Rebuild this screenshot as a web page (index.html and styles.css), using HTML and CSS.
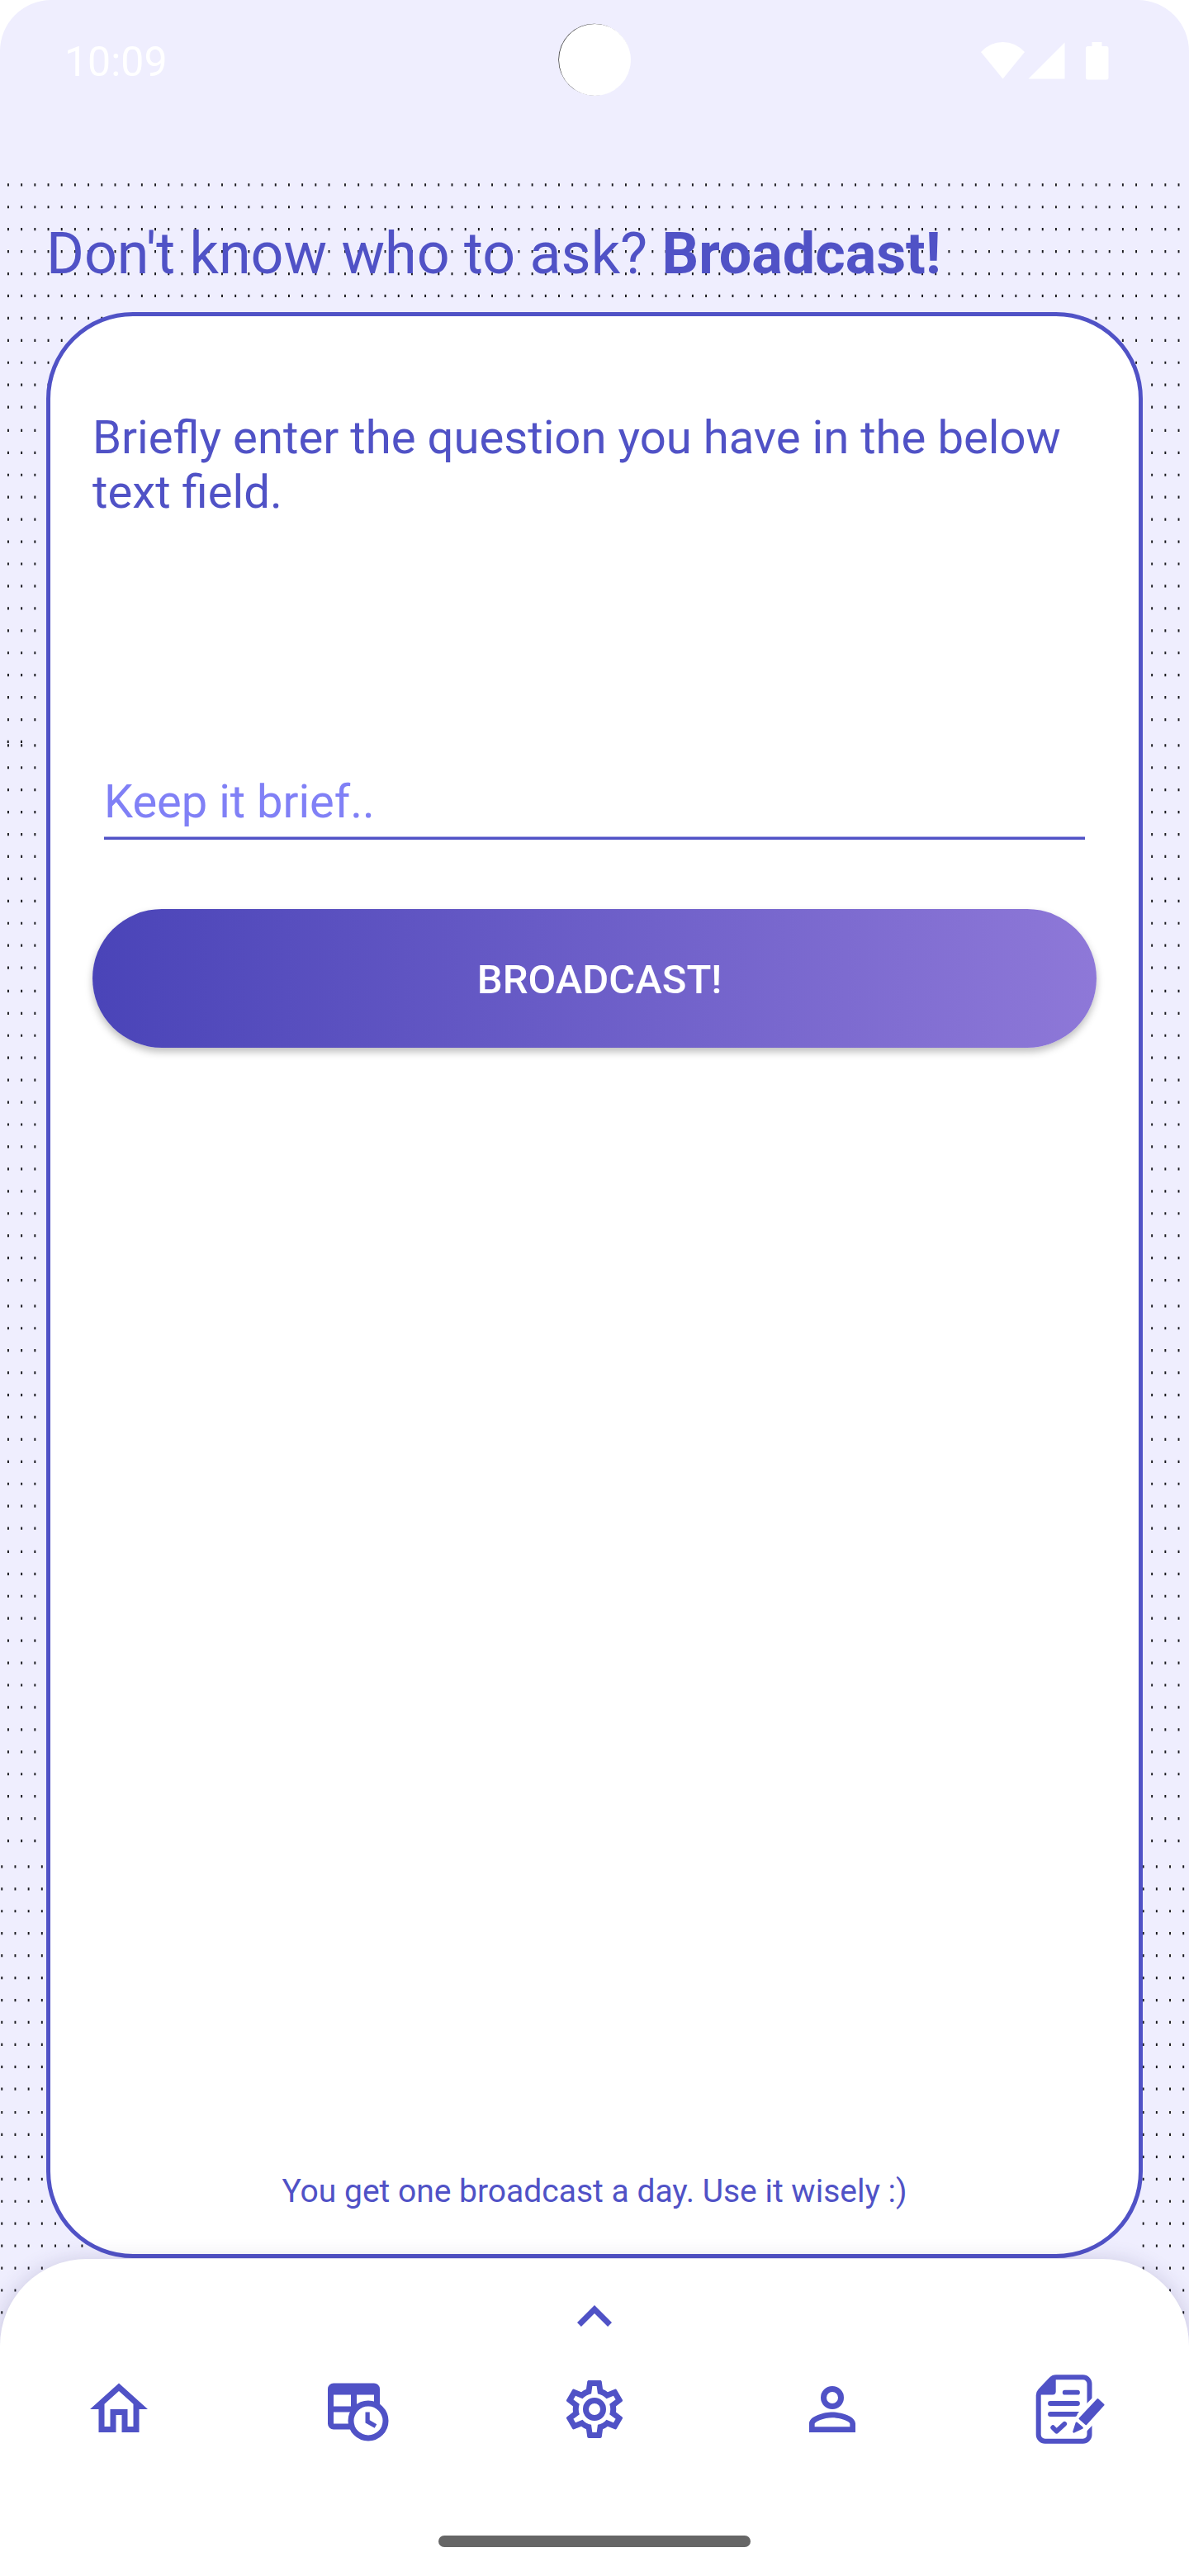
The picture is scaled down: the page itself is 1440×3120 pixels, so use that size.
FILE: index.html
```html
<!DOCTYPE html>
<html lang="en">
<head>
<meta charset="utf-8">
<title>Broadcast</title>
<link rel="stylesheet" href="styles.css">
</head>
<body>
<div class="screen">
  <svg class="dots" viewBox="0 0 1440 3120" aria-hidden="true">
    <defs>
      <path id="row" d="M9 0H401M417 0H889.5M905.6 0H1378M1394.2 0H1440"/>
      <path id="row-low" d="M1.3 0H120M1383.7 0H1440"/>
      <g id="five"><use href="#row"/><use href="#row" y="26.93"/><use href="#row" y="53.87"/><use href="#row" y="80.8"/><use href="#row" y="107.73"/></g>
      <g id="block">
        <use href="#five"/><use href="#five" y="134.67"/><use href="#row" y="269.33"/>
        <use href="#five" y="297.6"/><use href="#five" y="432.27"/>
        <use href="#row" y="566.93"/><use href="#row" y="593.87"/><use href="#row" y="620.8"/><use href="#row" y="647.73"/>
      </g>
      <g id="five-low"><use href="#row-low"/><use href="#row-low" y="26.93"/><use href="#row-low" y="53.87"/><use href="#row-low" y="80.8"/><use href="#row-low" y="107.73"/></g>
    </defs>
    <g class="dot-rows">
      <use href="#block" y="223.8"/>
      <path d="M8.8 898.3H30"/>
      <use href="#block" y="902.8"/>
      <use href="#block" y="1581.8"/>
      <use href="#five-low" y="2260.9"/><use href="#five-low" y="2395.6"/><use href="#row-low" y="2530.2"/>
      <use href="#five-low" y="2558.5"/><use href="#five-low" y="2693.2"/>
    </g>
  </svg>

  <header class="status">
    <span class="time">10:09</span>
    <span class="camera"></span>
    <svg class="status-icons" viewBox="0 0 156 48" aria-hidden="true">
      <path d="M0 13Q11 1 26.500 1T53 13L26.500 45.500Z"/>
      <path d="M57.500 45.500L101.500 1.500V45.500Z"/>
      <path d="M134.500 1h12v5h5.500a2.500 2.500 0 0 1 2.500 2.500v35.500a2.500 2.500 0 0 1-2.500 2.500h-22.500a2.500 2.500 0 0 1-2.500-2.500V8.500a2.500 2.500 0 0 1 2.500-2.500h5z"/>
    </svg>
  </header>

  <main class="main">
    <h1 class="title">Don't know who to ask? <b>Broadcast!</b></h1>
    <section class="card">
      <p class="lead">Briefly enter the question you have in the below text field.</p>
      <div class="field">Keep it brief..</div>
      <button class="send" type="button">BROADCAST!</button>
      <p class="note">You get one broadcast a day. Use it wisely :)</p>
    </section>
  </main>

  <nav class="nav">
    <svg class="icon" viewBox="0 0 24 24"><path d="M7.410 15.410L12 10.830l4.590 4.580L18 14l-6-6-6 6z"/></svg>
    <div class="tabs">
      <svg class="icon" viewBox="0 0 24 24"><path d="M12 5.690l5 4.500V18h-2v-6H9v6H7v-7.810l5-4.500M12 3L2 12h3v8h6v-6h2v6h6v-8h3L12 3z"/></svg>
      <svg class="icon" viewBox="0 0 24 24">
        <path fill-rule="evenodd" d="M4 3h14a2 2 0 0 1 2 2v12a2 2 0 0 1-2 2H4a2 2 0 0 1-2-2V5a2 2 0 0 1 2-2zM4 7v4h6V7zM12 7v4h6V7zM4 13v4h6v-4z"/>
        <circle cx="16" cy="16" r="6" class="clock"/>
        <path d="M15 13h1.500v2.820l2.440 1.410-.750 1.300L15 16.690z"/>
      </svg>
      <svg class="icon" viewBox="0 0 24 24"><path d="M12,8A4,4 0 0,1 16,12A4,4 0 0,1 12,16A4,4 0 0,1 8,12A4,4 0 0,1 12,8M12,10A2,2 0 0,0 10,12A2,2 0 0,0 12,14A2,2 0 0,0 14,12A2,2 0 0,0 12,10M10,22C9.75,22 9.54,21.82 9.5,21.58L9.13,18.93C8.5,18.68 7.96,18.34 7.44,17.94L4.95,18.95C4.73,19.03 4.46,18.95 4.34,18.73L2.34,15.27C2.21,15.05 2.27,14.78 2.46,14.63L4.57,12.97L4.5,12L4.57,11L2.46,9.37C2.27,9.22 2.21,8.95 2.34,8.73L4.34,5.27C4.46,5.05 4.73,4.96 4.95,5.05L7.44,6.05C7.96,5.66 8.5,5.32 9.13,5.07L9.5,2.42C9.54,2.18 9.75,2 10,2H14C14.25,2 14.46,2.18 14.5,2.42L14.87,5.07C15.5,5.32 16.04,5.66 16.56,6.05L19.05,5.05C19.27,4.96 19.54,5.05 19.66,5.27L21.66,8.73C21.79,8.95 21.73,9.22 21.54,9.37L19.43,11L19.5,12L19.43,13L21.54,14.63C21.73,14.78 21.79,15.05 21.66,15.27L19.66,18.73C19.54,18.95 19.27,19.04 19.05,18.95L16.56,17.95C16.04,18.34 15.5,18.68 14.87,18.93L14.5,21.58C14.46,21.82 14.25,22 14,22H10M11.25,4L10.88,6.61C9.68,6.86 8.62,7.5 7.85,8.39L5.44,7.35L4.69,8.65L6.8,10.2C6.4,11.37 6.4,12.64 6.8,13.8L4.68,15.36L5.43,16.66L7.86,15.62C8.63,16.5 9.68,17.14 10.87,17.38L11.24,20H12.76L13.13,17.39C14.32,17.14 15.37,16.5 16.14,15.62L18.57,16.66L19.32,15.36L17.2,13.81C17.6,12.64 17.6,11.37 17.2,10.2L19.31,8.65L18.56,7.35L16.15,8.39C15.38,7.5 14.32,6.86 13.12,6.62L12.75,4H11.25Z"/></svg>
      <svg class="icon" viewBox="0 0 24 24"><path d="M12,4A4,4 0 0,1 16,8A4,4 0 0,1 12,12A4,4 0 0,1 8,8A4,4 0 0,1 12,4M12,6A2,2 0 0,0 10,8A2,2 0 0,0 12,10A2,2 0 0,0 14,8A2,2 0 0,0 12,6M12,13C14.67,13 20,14.33 20,17V20H4V17C4,14.33 9.33,13 12,13M12,14.9C9.03,14.9 5.9,16.36 5.9,17V18.1H18.1V17C18.1,16.36 14.97,14.9 12,14.9Z"/></svg>
      <svg class="icon" viewBox="0 0 84 84">
        <path class="page" d="M65.500 37V11.300a8 8 0 0 0-8-8H25q-3.500 0-6 2.500L6 19.500Q3.700 22 3.700 25V72.700a8 8 0 0 0 8 8h45.800a8 8 0 0 0 8-8V58"/>
        <path class="gap" d="M62 35.300L69 28.300H73V61.500H69L62 68.700Z"/>
        <path d="M24.700 3V20.500q0 4-4 4H3V22L21 4Z"/>
        <path class="lines" d="M35.700 21.700H51M18 35H51M18 48H47.700M21.200 64.200L25.700 68.700L35.200 59.800"/>
        <path d="M47 45.100H53L48 50.900H47Z"/>
        <path class="pencil" d="M75.500 30.500L82.200 36.700L61.200 59.800L53.900 53.300Z"/>
        <path class="pencil" d="M49.800 58.800L56.500 64.600L46.500 69.300Z"/>
      </svg>
    </div>
    <span class="handle"></span>
  </nav>
</div>
</body>
</html>
```
FILE: styles.css
```css
* { box-sizing: border-box; }
body { margin: 0; background: #fff; font-family: Roboto, sans-serif; color: #5052c6; }
.screen {
  position: relative;
  display: flex;
  flex-direction: column;
  width: 1440px;
  height: 3120px;
  overflow: hidden;
  background: #efeefe;
  border-radius: 62px 62px 0 0;
}
.dots { position: absolute; inset: 0; width: 1440px; height: 3120px; }
.dot-rows { fill: none; stroke: #17171c; stroke-width: 3.2; stroke-dasharray: 1.9 14.29; }

.status {
  position: relative;
  display: flex;
  justify-content: space-between;
  align-items: center;
  height: 148px;
  padding: 0 96px 0 78px;
  color: #fff;
}
.time { margin-top: 2px; font-size: 50px; line-height: 58px; }
.camera {
  position: absolute;
  left: 677px;
  top: 29px;
  width: 87px;
  height: 87px;
  border-radius: 50%;
  background: #fff;
  box-shadow: -0.8px -0.3px 0 -0.1px #333;
}
.status-icons { width: 156px; height: 48px; fill: #fff; }

.main { position: relative; height: 2588px; padding: 118px 56px 0; display: flex; flex-direction: column; }
.title { margin: 0; font-size: 70px; line-height: 82px; font-weight: 400; height: 112px; white-space: nowrap; }
.title b { font-weight: 700; }
.card {
  height: 2357px;
  display: flex;
  flex-direction: column;
  padding: 115px 51px 53px;
  background: #fff;
  border: 5px solid #5052c6;
  border-radius: 105px;
}
.lead { margin: 0; font-size: 56.250px; line-height: 65.600px; }
.field {
  margin: 308.800px 14px 0;
  height: 79px;
  border-bottom: 3px solid #5052c6;
  box-shadow: inset 0 -1px 0 #a8a9e3;
  font-size: 56px;
  line-height: 66px;
  color: #8080f6;
}
.send {
  margin-top: 84px;
  height: 168px;
  flex: none;
  padding: 4px 0 0 12px;
  border: 0;
  border-radius: 84px;
  background: linear-gradient(90deg, #4a44b8, #8e78d8);
  box-shadow: 0 5px 10px rgba(0, 0, 0, .26);
  color: #fff;
  font: 500 49px/58px Roboto, sans-serif;
}
.note { margin: auto 0 0; text-align: center; font-size: 39px; line-height: 45px; }

.nav {
  position: relative;
  display: flex;
  flex-direction: column;
  align-items: center;
  gap: 28px;
  height: 384px;
  padding-top: 28px;
  background: #fff;
  border-radius: 105px 105px 0 0;
  box-shadow: 0 4px 28px rgba(60, 50, 110, .24);
}
.icon { display: block; width: 84px; height: 84px; fill: #5052c6; }
.tabs { display: grid; grid-template-columns: repeat(5, 1fr); width: 100%; justify-items: center; }
.clock { fill: #fff; stroke: #5052c6; stroke-width: 2; }
.page { fill: none; stroke: #5052c6; stroke-width: 6; }
.gap { fill: #fff; }
.lines { fill: none; stroke: #5052c6; stroke-width: 5.800; stroke-linecap: round; stroke-linejoin: round; }
.pencil { stroke: #5052c6; stroke-width: 2.600; stroke-linejoin: round; }
.handle { width: 378px; height: 14px; margin-top: 83px; border-radius: 7px; background: #666; }
```
